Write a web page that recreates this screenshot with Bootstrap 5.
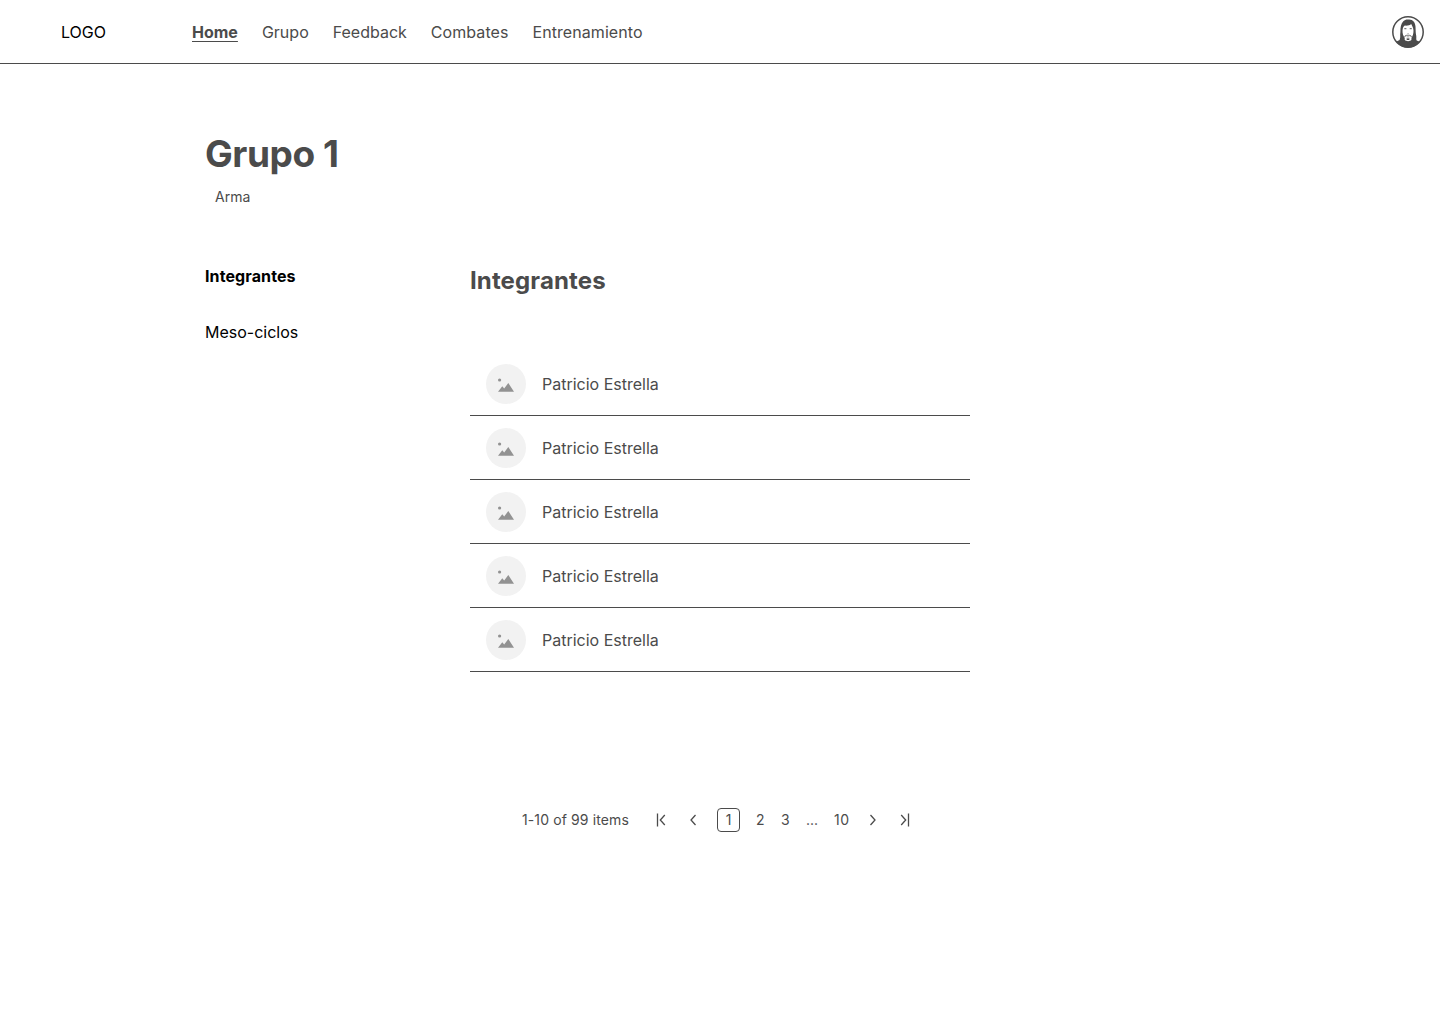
<!DOCTYPE html>
<html lang="es">
<head>
<meta charset="utf-8">
<meta name="viewport" content="width=device-width, initial-scale=1">
<title>Grupo 1</title>
<link href="https://cdn.jsdelivr.net/npm/bootstrap@5.3.0/dist/css/bootstrap.min.css" rel="stylesheet">
<style>
  body { font-family: Inter, sans-serif; font-size: 16px; line-height: 24px; color: #4b4b4b; background: #fff; }
  .topbar { height: 64px; border-bottom: 1px solid #4b4b4b; padding: 0 16px 0 61px; }
  .topbar .navbar-brand { width: 131px; font-size: 16px; line-height: 24px; color: #000; }
  .topbar .nav { gap: 24px; }
  .topbar .nav-link { padding: 0; color: #4b4b4b; }
  .topbar .nav-link:nth-child(n+4) { letter-spacing: .07px; }
  .topbar .nav-link.active { font-weight: 700; text-decoration: underline; text-decoration-thickness: 1px; text-underline-offset: 3px; }
  .page { padding: 66px 0 0 205px; }
  .page-title { font-size: 37px; line-height: 48px; font-weight: 700; letter-spacing: -.45px; }
  .weapon { font-size: 14px; line-height: 20px; padding-left: 10px; margin-top: 9px; }
  .columns { margin-top: 57px; }
  .side { width: 265px; gap: 32px; }
  .side .nav-link { padding: 0; color: #000; }
  .side .fw-bold { letter-spacing: .1px; }
  .members { width: 500px; }
  .section-title { font-size: 24px; line-height: 32px; font-weight: 700; letter-spacing: .13px; padding-top: 1px; margin-bottom: 55px; }
  .members .list-group-item { height: 64px; padding: 0 16px; gap: 16px; color: #4b4b4b; border: 0; border-bottom: 1px solid #4b4b4b; }
  .pager { margin: 136px 0 0 52px; height: 24px; font-size: 14px; line-height: 20px; }
  .pager .range { letter-spacing: .12px; }
  .pager .page-link { padding: 0; border: 0; color: #4b4b4b; background: none; font-size: 14px; line-height: 20px; }
  .pager .digits { letter-spacing: .4px; }
  .pager .current { width: 23px; height: 24px; line-height: 22px; text-align: center; border: 1px solid #4b4b4b; border-radius: 4px; }
  .pager svg { display: block; fill: none; stroke: #4b4b4b; stroke-width: 1.3; }
</style>
<script src="https://cdn.jsdelivr.net/npm/bootstrap@5.3.0/dist/js/bootstrap.bundle.min.js"></script>
</head>
<body>
<svg class="d-none">
  <symbol id="photo" viewBox="0 0 40 40">
    <circle cx="20" cy="20" r="20" fill="#f2f2f2"/>
    <circle cx="13.6" cy="16" r="1.6" fill="#929292"/>
    <path d="M12 27.800 16.300 22.200 18.200 24.400 22.300 19 28 27.800Z" fill="#929292"/>
  </symbol>
</svg>

<header class="topbar navbar flex-nowrap justify-content-start">
  <a class="navbar-brand m-0 p-0" href="#">LOGO</a>
  <nav class="nav flex-nowrap">
    <a class="nav-link active" href="#">Home</a>
    <a class="nav-link" href="#">Grupo</a>
    <a class="nav-link" href="#">Feedback</a>
    <a class="nav-link" href="#">Combates</a>
    <a class="nav-link" href="#">Entrenamiento</a>
  </nav>
  <a class="ms-auto d-flex" href="#" aria-label="Perfil">
    <svg width="32" height="32" viewBox="0 0 32 32">
      <clipPath id="disc"><circle cx="16" cy="16" r="15.5"/></clipPath>
      <circle cx="16" cy="16" r="15.3" fill="#fff"/>
      <g clip-path="url(#disc)">
        <path d="M7.600 24C8.800 21.500 7.800 19 8.400 16C8.300 11.500 9 7.500 11.300 5.200C13 3.500 15 3.200 16.700 3.600C20.800 3.300 23.200 6.500 23.500 10.500C23.700 14 23.600 17 24.200 19.500C24.600 22 23.900 23 24.700 24.400L28.500 26L25 32H7L3.500 26Z" fill="#4b4b4b"/>
        <path d="M10.500 14.500C10.700 12 11.500 10.500 12.800 9.600C15.500 9.800 18 9.300 19.200 8.100C20.200 10 21.300 12 21.500 14.500C21.500 17.500 20.900 20 19.500 21.700L19.400 24C18 25.500 14.200 25.500 12.700 24V21.700C11.200 20 10.400 17.500 10.500 14.500Z" fill="#fff"/>
        <path d="M12.900 21V20C14 18.900 18 18.900 19.200 20V21" fill="none" stroke="#4b4b4b" stroke-width=".8"/>
        <path d="M14.600 20.900H17.400" stroke="#777" stroke-width=".7"/>
        <path d="M14.300 22.800Q16 21.800 17.800 22.800L17 24H15Z" fill="#4b4b4b"/>
        <path d="M12.300 12.700H14.400M17.700 12.700H19.800" stroke="#4b4b4b" stroke-width=".9"/>
        <path d="M15.300 17.500H16.900" stroke="#999" stroke-width=".6"/>
      </g>
      <circle cx="16" cy="16" r="15.200" fill="none" stroke="#4b4b4b" stroke-width="1.500"/>
    </svg>
  </a>
</header>

<main class="page">
  <h1 class="page-title m-0">Grupo 1</h1>
  <div class="weapon">Arma</div>
  <div class="columns d-flex align-items-start">
    <nav class="side nav flex-column flex-shrink-0">
      <a class="nav-link fw-bold" href="#">Integrantes</a>
      <a class="nav-link" href="#">Meso-ciclos</a>
    </nav>
    <section>
      <h2 class="section-title">Integrantes</h2>
      <ul class="members list-group rounded-0">
        <li class="list-group-item d-flex align-items-center"><svg width="40" height="40"><use href="#photo"/></svg>Patricio Estrella</li>
        <li class="list-group-item d-flex align-items-center"><svg width="40" height="40"><use href="#photo"/></svg>Patricio Estrella</li>
        <li class="list-group-item d-flex align-items-center"><svg width="40" height="40"><use href="#photo"/></svg>Patricio Estrella</li>
        <li class="list-group-item d-flex align-items-center"><svg width="40" height="40"><use href="#photo"/></svg>Patricio Estrella</li>
        <li class="list-group-item d-flex align-items-center"><svg width="40" height="40"><use href="#photo"/></svg>Patricio Estrella</li>
      </ul>
      <div class="pager d-flex align-items-center">
        <span class="range">1-10 of 99 items</span>
        <ul class="pagination m-0 ms-4 align-items-center gap-3">
          <li><a class="page-link" href="#" aria-label="Primera"><svg width="16" height="16"><path d="M4.500 1.500V14.500M11.800 3 7.300 8 11.800 13"/></svg></a></li>
          <li><a class="page-link" href="#" aria-label="Anterior"><svg width="16" height="16"><path d="M10.500 3 6 8 10.500 13"/></svg></a></li>
          <li><a class="page-link current" href="#">1</a></li>
          <li><a class="page-link digits" href="#">2</a></li>
          <li><a class="page-link digits" href="#">3</a></li>
          <li><span>...</span></li>
          <li><a class="page-link digits" href="#">10</a></li>
          <li><a class="page-link" href="#" aria-label="Siguiente"><svg width="16" height="16"><path d="M5.500 3 10 8 5.500 13"/></svg></a></li>
          <li><a class="page-link" href="#" aria-label="Última"><svg width="16" height="16"><path d="M11.500 1.500V14.500M4.200 3 8.700 8 4.200 13"/></svg></a></li>
        </ul>
      </div>
    </section>
  </div>
</main>
</body>
</html>
